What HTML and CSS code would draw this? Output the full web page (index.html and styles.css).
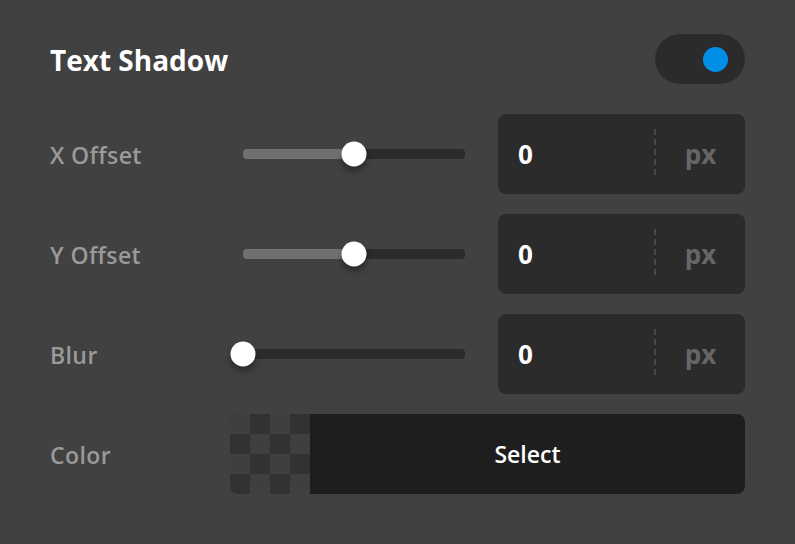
FILE: index.html
```html
<!DOCTYPE html>
<html>
<head>
<meta charset="utf-8">
<link rel="stylesheet" href="styles.css">
</head>
<body>
<div class="panel">
  <div class="header">
    <div class="title">Text Shadow</div>
    <div class="toggle"><span class="toggle-knob"></span></div>
  </div>
  <div class="rows">
    <div class="label">X Offset</div>
    <div class="slider"><div class="track"><div class="fill" style="width:50%"></div><span class="knob" style="left:50%"></span></div></div>
    <div class="field"><span class="value">0</span><span class="divider"></span><span class="unit">px</span></div>

    <div class="label">Y Offset</div>
    <div class="slider"><div class="track"><div class="fill" style="width:50%"></div><span class="knob" style="left:50%"></span></div></div>
    <div class="field"><span class="value">0</span><span class="divider"></span><span class="unit">px</span></div>

    <div class="label">Blur</div>
    <div class="slider"><div class="track"><div class="fill" style="width:0%"></div><span class="knob" style="left:0%"></span></div></div>
    <div class="field"><span class="value">0</span><span class="divider"></span><span class="unit">px</span></div>

    <div class="label">Color</div>
    <div class="color">
      <div class="checker"></div>
      <div class="select">Select</div>
    </div>
  </div>
</div>
</body>
</html>
```
FILE: styles.css
```css
html, body {
  margin: 0;
  padding: 0;
  background: #414141;
  font-family: "Open Sans", "Noto Sans", sans-serif;
}
.panel {
  width: 795px;
  height: 544px;
  box-sizing: border-box;
  padding: 34px 50px 0 50px;
}
.header {
  display: flex;
  align-items: center;
  justify-content: space-between;
  height: 50px;
}
.title {
  color: #ffffff;
  font-weight: 700;
  font-size: 28px;
  letter-spacing: 0;
  margin-top: 2px;
}
.toggle {
  width: 90px;
  height: 50px;
  border-radius: 25px;
  background: #2b2b2b;
  display: flex;
  align-items: center;
  justify-content: flex-end;
  padding-right: 17px;
  box-sizing: border-box;
}
.toggle-knob {
  width: 25px;
  height: 25px;
  border-radius: 50%;
  background: #008fe6;
}
.rows {
  margin-top: 30px;
  display: grid;
  grid-template-columns: 180px 268px 247px;
  grid-auto-rows: 80px;
  row-gap: 20px;
  align-items: center;
}
.label {
  color: #9a9a9a;
  font-size: 23px;
  font-weight: 600;
  letter-spacing: 0.4px;
  margin-top: 2px;
}
.slider {
  padding-left: 13px;
  padding-right: 33px;
}
.track {
  position: relative;
  height: 10px;
  border-radius: 4px;
  background: #2b2b2b;
}
.fill {
  height: 100%;
  border-radius: 4px;
  background: #707070;
}
.knob {
  position: absolute;
  top: 50%;
  width: 25px;
  height: 25px;
  border-radius: 50%;
  background: #ffffff;
  transform: translate(-50%, -50%);
  box-shadow: 0 5px 6px rgba(0, 0, 0, 0.35);
}
.field {
  height: 80px;
  background: #2b2b2b;
  border-radius: 8px;
  display: flex;
  align-items: center;
}
.value {
  flex: 1;
  padding-left: 20px;
  color: #ffffff;
  font-size: 26px;
  font-weight: 700;
}
.divider {
  width: 2px;
  height: 50px;
  background: repeating-linear-gradient(to bottom, #484848 0 6px, transparent 6px 10px);
}
.unit {
  width: 89px;
  text-align: center;
  color: #666666;
  font-size: 26px;
  font-weight: 700;
}
.color {
  grid-column: 2 / 4;
  display: flex;
  height: 80px;
  border-radius: 8px;
  overflow: hidden;
}
.checker {
  width: 80px;
  flex: none;
  background-color: #333333;
  background-image:
    conic-gradient(#323232 0 25%, #3f3f3f 0 50%, #323232 0 75%, #3f3f3f 0);
  background-size: 40px 40px;
}
.select {
  flex: 1;
  background: #1e1e1e;
  color: #ffffff;
  display: flex;
  align-items: center;
  justify-content: center;
  font-size: 23px;
  font-weight: 600;
}
```
